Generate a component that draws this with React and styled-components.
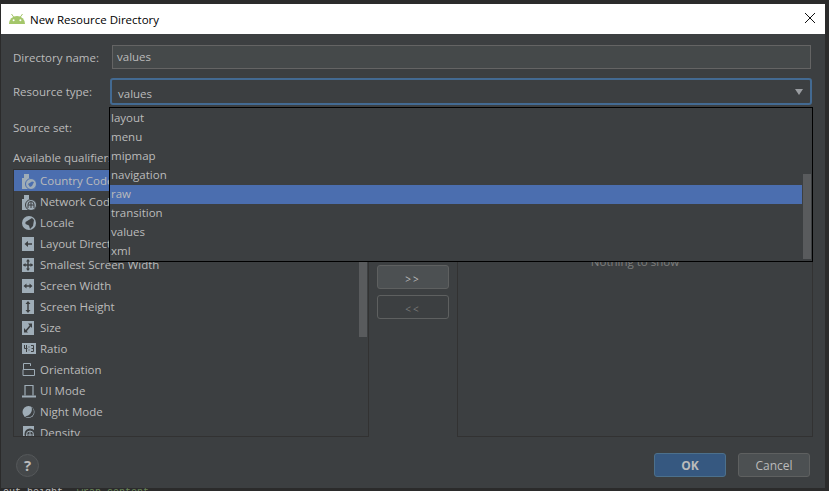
import styled, { createGlobalStyle } from 'styled-components';

const GlobalStyle = createGlobalStyle`
  html, body {
    margin: 0;
    height: 100%;
    background: #2b2b2b;
    overflow: hidden;
  }
`;

const Page = styled.div`
  width: 829px;
  height: 491px;
  padding: 4px 4px 0 1px;
  box-sizing: border-box;
  overflow: hidden;
  font-family: "Open Sans", "Noto Sans", sans-serif;
  font-size: 11.5px;
  color: #bbbbbb;
`;

const Dialog = styled.div`
  position: relative;
  width: 824px;
  height: 484px;
  background: #3c3f41;
  display: flex;
  flex-direction: column;
`;

// editor text showing under the dialog's bottom edge
const EditorStrip = styled.div`
  height: 3px;
  overflow: hidden;
  display: flex;
  gap: 14px;
  padding-left: 2px;
  font-family: "Liberation Mono", monospace;
  font-size: 10px;
  line-height: 10px;
`;

const EditorWord = styled.span`
  color: ${(p) => p.$color};
`;

const TitleBar = styled.div`
  height: 30px;
  flex: none;
  background: #ffffff;
  color: #000000;
  display: flex;
  align-items: center;
  padding: 0 9px 0 8px;
  gap: 5px;
`;

const TitleText = styled.span`
  flex: 1;
`;

const CloseIcon = styled.svg`
  width: 12px;
  height: 12px;
  margin-top: -2px;
`;

const Body = styled.div`
  flex: 1;
  padding: 11px 14px 11px 12px;
  display: flex;
  flex-direction: column;
  min-height: 0;
`;

const Row = styled.div`
  display: flex;
  align-items: center;
  flex: none;
  height: ${(p) => p.$h}px;
  margin-bottom: ${(p) => p.$mb || 0}px;
`;

const Label = styled.label`
  width: 99px;
  flex: none;
`;

const TextField = styled.div`
  flex: 1;
  height: 24px;
  box-sizing: border-box;
  background: #45494a;
  border: 1px solid #646464;
  padding-left: 4px;
  line-height: 22px;
`;

const Combo = styled.div`
  flex: 1;
  margin: 0 -1px 0 -2px;
  height: 27px;
  box-sizing: border-box;
  border: 2px solid #436a92;
  border-radius: 3px;
  display: flex;
  align-items: center;
  justify-content: space-between;
  padding: 3px 6px 0 6px;
`;

const Arrow = styled.span`
  width: 0;
  height: 0;
  margin: -3px 1px 0 0;
  border-left: 4.5px solid transparent;
  border-right: 4.5px solid transparent;
  border-top: 6px solid #9a9da1;
`;

const QualifierGrid = styled.div`
  flex: 1;
  display: grid;
  grid-template-columns: 356px 88px 356px;
  min-height: 0;
`;

const ListBox = styled.div`
  border: 1px solid #323232;
  height: 268px;
  box-sizing: border-box;
  position: relative;
  overflow: hidden;
`;

const QualifierRow = styled.div`
  height: 21px;
  display: flex;
  align-items: center;
  gap: 3px;
  padding-left: 8px;
  margin-right: 10px;
  background: ${(p) => (p.$selected ? '#4b6eaf' : 'transparent')};
`;

const IconBox = styled.svg`
  width: 15px;
  height: 16px;
  flex: none;
`;

const ListScrollThumb = styled.div`
  position: absolute;
  top: 0;
  right: 1px;
  width: 8px;
  height: 167px;
  background: #595b5d;
`;

const EmptyText = styled.div`
  position: absolute;
  top: 84px;
  left: 0;
  right: 0;
  text-align: center;
  color: #7f7f7f;
`;

const MoveColumn = styled.div`
  display: flex;
  flex-direction: column;
  align-items: center;
  gap: 6px;
  padding-top: 96px;
`;

const Button = styled.button`
  width: 72px;
  height: 24px;
  box-sizing: border-box;
  border-radius: 3px;
  padding: 0;
  font-family: inherit;
  font-size: 12px;
  font-weight: ${(p) => (p.$primary ? 700 : 400)};
  background: ${(p) => (p.$primary ? '#365880' : p.$ghost ? 'transparent' : '#4c5052')};
  border: 1px solid ${(p) => (p.$primary ? '#4c708c' : '#5e6060')};
  color: ${(p) => (p.$ghost ? '#777777' : '#bbbbbb')};
`;

const MoveButton = styled(Button)`
  font-size: 10px;
  letter-spacing: 2px;
  padding-top: 3px;
`;

const Footer = styled.div`
  display: flex;
  align-items: center;
  justify-content: space-between;
  flex: none;
  padding-left: 3px;
`;

const Help = styled.div`
  width: 23px;
  height: 23px;
  border-radius: 50%;
  background: #45484a;
  border: 1px solid #55585a;
  box-sizing: border-box;
  text-align: center;
  line-height: 21px;
  font-weight: 700;
  font-size: 15px;
`;

const FooterButtons = styled.div`
  display: flex;
  gap: 12px;
  margin-right: 1px;
`;

const Popup = styled.div`
  position: absolute;
  left: 108px;
  top: 103px;
  width: 702px;
  height: 152px;
  background: #3c3f41;
  border: 1px solid #000000;
  padding-top: 1px;
  display: flex;
  flex-direction: column;
`;

const PopupItem = styled.div`
  height: 19px;
  line-height: 18px;
  padding-left: 1px;
  margin-right: 10px;
  flex: none;
  background: ${(p) => (p.$selected ? '#4b6eaf' : 'transparent')};
`;

const PopupThumb = styled.div`
  position: absolute;
  right: 1px;
  top: 66px;
  width: 8px;
  height: 85px;
  background: #595b5d;
`;

const Android = () => (
  <svg width="16" height="10" viewBox="0 0 16 10">
    <path d="M0 10 A8 8 0 0 1 16 10Z" fill="#a4c66a" />
    <path d="M2.5 0 L5 3.5 M13.5 0 L11 3.5" stroke="#a4c66a" strokeWidth="1" />
    <circle cx="4.6" cy="6.2" r="1" fill="#fff" />
    <circle cx="11.4" cy="6.2" r="1" fill="#fff" />
  </svg>
);

const c = '#9fadb7';
const d = '#3c3f41';

const CountryIcon = ({ net, bg = d }) => (
  <IconBox viewBox="0 0 15 16">
    <path d="M0 5 H2 V1 H7 V5 H8 V16 H0Z" fill={c} />
    <circle cx="9" cy="11" r="5.5" fill={c} stroke={bg} />
    {net ? (
      <path d="M6 14 V10.5 A3 3 0 0 1 12 10.5 V14 M9 8 V14 M6 11 H12" stroke={d} fill="none" />
    ) : (
      <path d="M6 11 L10 8.5 L12 9 L10 13 L8 14Z" fill={bg} />
    )}
  </IconBox>
);

const GlyphBox = ({ children }) => (
  <IconBox viewBox="0 0 15 16">
    <rect x="0" y="1" width="12" height="14" fill={c} />
    {children}
  </IconBox>
);

const icons = {
  country: <CountryIcon bg="#4b6eaf" />,
  network: <CountryIcon net />,
  locale: (
    <IconBox viewBox="0 0 15 16">
      <circle cx="7" cy="8" r="7" fill={c} />
      <path d="M3.5 7 L10 3 L12 5 L11 11 L8 14 L7 10.5 L3.5 9Z" fill={d} />
    </IconBox>
  ),
  direction: (
    <GlyphBox>
      <path d="M4 8 H10" stroke={d} strokeWidth="1.5" />
      <path d="M2.5 8 L6 5 V11Z" fill={d} />
    </GlyphBox>
  ),
  smallest: (
    <GlyphBox>
      <path d="M6 3 V13 M1.5 8 H10.5" stroke={d} strokeWidth="1.5" />
      <path d="M6 2 L8 4.5 H4Z M6 14 L8 11.5 H4Z M1 8 L3.5 6 V10Z M11 8 L8.5 6 V10Z" fill={d} />
    </GlyphBox>
  ),
  width: (
    <GlyphBox>
      <path d="M3 8 H9" stroke={d} strokeWidth="1.5" />
      <path d="M1.5 8 L4.5 5.5 V10.5Z M10.5 8 L7.5 5.5 V10.5Z" fill={d} />
    </GlyphBox>
  ),
  height: (
    <GlyphBox>
      <path d="M6 4 V12" stroke={d} strokeWidth="1.5" />
      <path d="M6 2 L8.5 5 H3.5Z M6 14 L8.5 11 H3.5Z" fill={d} />
    </GlyphBox>
  ),
  size: (
    <GlyphBox>
      <path d="M3.5 11.5 L8.5 5.5" stroke={d} strokeWidth="1.5" />
      <path d="M6 3.5 H10 V8Z M2 8 V12.5 H6Z" fill={d} />
    </GlyphBox>
  ),
  ratio: (
    <IconBox viewBox="0 0 15 16">
      <rect x="0" y="2" width="14" height="11" fill={c} />
      <path d="M2.5 4 V7.5 H5.5 M4.5 4 V11 M7 5.5 V6.5 M7 8.5 V9.5 M9 4.5 H11.5 V10.5 H9 M9.5 7.5 H11.5" stroke={d} fill="none" />
    </IconBox>
  ),
  orientation: (
    <IconBox viewBox="0 0 15 16">
      <path d="M1.5 7 V1.5 H8.5 V4 M1 7.5 H12.5 V13.5 H1Z" stroke={c} fill="none" />
    </IconBox>
  ),
  uimode: (
    <IconBox viewBox="0 0 15 16">
      <path d="M3 12.5 V2.5 H11 V12.5" stroke={c} strokeWidth="1.2" fill="none" />
      <rect x="0" y="12.5" width="14" height="2" fill={c} />
    </IconBox>
  ),
  night: (
    <IconBox viewBox="0 0 15 16">
      <circle cx="6.5" cy="8" r="6" fill={c} />
      <path d="M9.5 3 A5.5 5.5 0 0 1 3 12.3 A7 7 0 0 0 9.5 3Z" fill={d} />
    </IconBox>
  ),
  density: (
    <IconBox viewBox="0 0 15 16">
      <path d="M1 1 H12 V16 H1Z" fill={c} />
      <circle cx="8" cy="9" r="5.5" fill={d} />
      <path d="M4.5 15 V9.5 A3.5 3.5 0 0 1 11.5 9.5 V15 M8 6 V15 M4.5 10 H11.5" stroke={c} fill="none" />
    </IconBox>
  ),
};

const qualifiers = [
  ['country', 'Country Code'],
  ['network', 'Network Code'],
  ['locale', 'Locale'],
  ['direction', 'Layout Direction'],
  ['smallest', 'Smallest Screen Width'],
  ['width', 'Screen Width'],
  ['height', 'Screen Height'],
  ['size', 'Size'],
  ['ratio', 'Ratio'],
  ['orientation', 'Orientation'],
  ['uimode', 'UI Mode'],
  ['night', 'Night Mode'],
  ['density', 'Density'],
];

const resourceTypes = ['layout', 'menu', 'mipmap', 'navigation', 'raw', 'transition', 'values', 'xml'];

function App() {
  return (
    <Page>
      <GlobalStyle />
      <Dialog>
        <TitleBar>
          <Android />
          <TitleText>New Resource Directory</TitleText>
          <CloseIcon viewBox="0 0 12 12">
            <path d="M1 1 L11 11 M11 1 L1 11" stroke="#111" strokeWidth="1" />
          </CloseIcon>
        </TitleBar>
        <Body>
          <Row $h={24} $mb={9}>
            <Label>Directory name:</Label>
            <TextField>values</TextField>
          </Row>
          <Row $h={27} $mb={10}>
            <Label>Resource type:</Label>
            <Combo>
              values
              <Arrow />
            </Combo>
          </Row>
          <Row $h={24} $mb={10}>
            <Label>Source set:</Label>
          </Row>
          <Row $h={16} $mb={4}>Available qualifiers:</Row>
          <QualifierGrid>
            <ListBox>
              {qualifiers.map(([icon, name], i) => (
                <QualifierRow key={name} $selected={i === 0}>
                  {icons[icon]}
                  {name}
                </QualifierRow>
              ))}
              <ListScrollThumb />
            </ListBox>
            <MoveColumn>
              <MoveButton>&gt;&gt;</MoveButton>
              <MoveButton $ghost>&lt;&lt;</MoveButton>
            </MoveColumn>
            <ListBox>
              <EmptyText>Nothing to show</EmptyText>
            </ListBox>
          </QualifierGrid>
          <Footer>
            <Help>?</Help>
            <FooterButtons>
              <Button $primary>OK</Button>
              <Button>Cancel</Button>
            </FooterButtons>
          </Footer>
        </Body>
        <Popup>
          {resourceTypes.map((t) => (
            <PopupItem key={t} $selected={t === 'raw'}>
              {t}
            </PopupItem>
          ))}
          <PopupThumb />
        </Popup>
      </Dialog>
      <EditorStrip>
        <EditorWord $color="#bababa">out_height</EditorWord>
        <EditorWord $color="#6a8759">wrap_content</EditorWord>
      </EditorStrip>
    </Page>
  );
}

export default App;
